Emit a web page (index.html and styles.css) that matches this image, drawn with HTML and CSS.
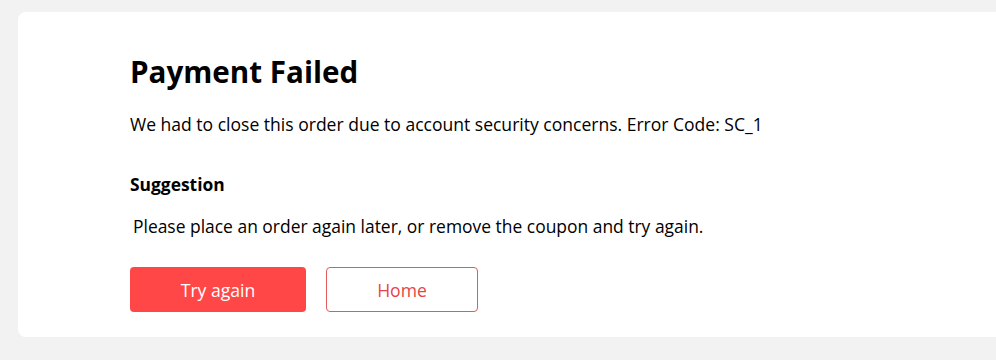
FILE: index.html
```html
<!DOCTYPE html>
<html>
<head>
<meta charset="utf-8">
<link rel="stylesheet" href="styles.css">
</head>
<body>
<div class="card">
  <h1 class="title">Payment Failed</h1>
  <p class="desc">We had to close this order due to account security concerns. Error Code: SC_1</p>
  <h2 class="sub">Suggestion</h2>
  <p class="tip">Please place an order again later, or remove the coupon and try again.</p>
  <div class="actions">
    <button class="btn btn-primary">Try again</button>
    <button class="btn btn-outline">Home</button>
  </div>
</div>
</body>
</html>
```
FILE: styles.css
```css
html, body {
  margin: 0;
  padding: 0;
  background: #f2f2f2;
  font-family: "Open Sans", "Liberation Sans", sans-serif;
  color: #000;
}
body {
  padding: 12px 0 0 18px;
  height: 360px;
  box-sizing: border-box;
  overflow: hidden;
}
.card {
  background: #fff;
  border-radius: 8px 0 0 8px;
  height: 325px;
  box-sizing: border-box;
  padding: 40px 0 0 112px;
}
.title {
  margin: 0;
  font-size: 29.6px;
  font-weight: 700;
  line-height: 40px;
}
.desc {
  margin: 20px 0 0;
  font-size: 17.55px;
  line-height: 24px;
}
.sub {
  margin: 36px 0 0;
  font-size: 17.4px;
  font-weight: 700;
  line-height: 24px;
}
.tip {
  margin: 18px 0 0 3px;
  font-size: 17.45px;
  line-height: 24px;
}
.actions {
  display: flex;
  gap: 20px;
  margin-top: 29px;
}
.btn {
  height: 45px;
  border-radius: 4px;
  font-family: inherit;
  font-size: 17.6px;
  padding: 0;
  cursor: pointer;
}
.btn-primary {
  width: 176px;
  background: #ff4747;
  border: none;
  color: #fff;
}
.btn-outline {
  width: 152px;
  background: #fff;
  border: 1px solid #e25a5a;
  color: #e64545;
}
```
